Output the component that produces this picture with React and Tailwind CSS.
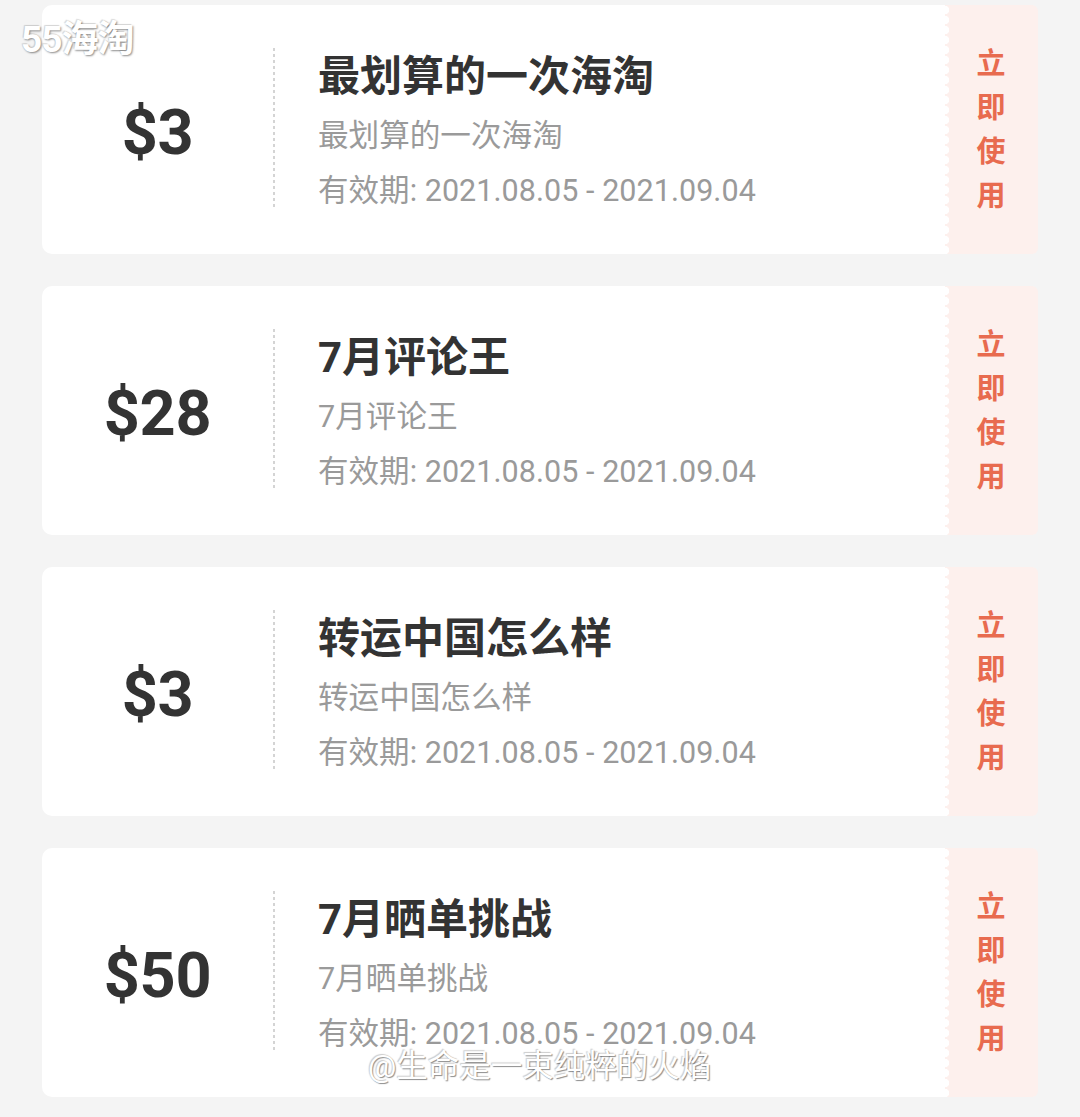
import React from "react";

const coupons = [
  { amount: "$3", title: "最划算的一次海淘", sub: "最划算的一次海淘" },
  { amount: "$28", title: "7月评论王", sub: "7月评论王" },
  { amount: "$3", title: "转运中国怎么样", sub: "转运中国怎么样" },
  { amount: "$50", title: "7月晒单挑战", sub: "7月晒单挑战" },
];

const font = { fontFamily: "Roboto, 'Noto Sans CJK SC', 'Noto Sans', sans-serif" };

function Coupon({ c }) {
  return (
    <div className="flex h-[249px]">
      <div className="flex flex-1 bg-white rounded-l-[10px] relative">
        <div className="w-[231px] flex items-center justify-center pt-[6px]">
          <span className="text-[63px] font-bold text-[#333333] leading-none tracking-[-0.3px]">{c.amount}</span>
        </div>
        <div className="pt-[43px]">
          <div className="w-[2px] h-[162px] bg-[linear-gradient(#d4d4d4_55%,transparent_55%)] bg-[length:2px_6px]" />
        </div>
        <div className="pl-[43px] pt-[47px] flex flex-col">
          <div className="text-[42px] font-bold text-[#333333] leading-[50px]">{c.title}</div>
          <div className="mt-[14px] text-[30.6px] text-[#9a9a9a] leading-[40px]">{c.sub}</div>
          <div className="mt-[15px] text-[30.5px] text-[#9a9a9a] leading-[40px] tracking-[0.05px]">有效期: 2021.08.05 - 2021.09.04</div>
        </div>
      </div>
      <div className="w-[93px] flex bg-[#fdf0ed] rounded-r-[6px]">
        <div className="w-[5px] h-full bg-[radial-gradient(circle_at_left,#ffffff_4px,transparent_4.5px)] bg-[length:5px_10px]" />
        <div className="flex-1 flex flex-col items-center justify-center pr-[6px]">
          {"立即使用".split("").map((ch, i) => (
            <span key={i} className="text-[29px] font-bold text-[#e86b4f] leading-[44px]">{ch}</span>
          ))}
        </div>
      </div>
    </div>
  );
}

export default function App() {
  return (
    <div className="relative w-[1080px] h-[1117px] bg-[#f4f4f4] overflow-hidden" style={font}>
      <div className="pt-[5px] pl-[42px] pr-[42px] flex flex-col gap-[32px]">
        {coupons.map((c, i) => (
          <Coupon key={i} c={c} />
        ))}
      </div>
      <div
        className="absolute left-[21px] top-[21px] text-[37px] font-bold text-white leading-none tracking-[-1px]"
        style={{ textShadow: "1px 1px 2px rgba(0,0,0,0.45), -1px -1px 1px rgba(0,0,0,0.15)" }}
      >
        55海淘
      </div>
      <div
        className="absolute left-[368px] top-[1051px] text-[31.5px] text-white leading-none"
        style={{ textShadow: "1px 1px 1px rgba(0,0,0,0.45), -1px -1px 1px rgba(0,0,0,0.2)" }}
      >
        @生命是一束纯粹的火焰
      </div>
    </div>
  );
}
